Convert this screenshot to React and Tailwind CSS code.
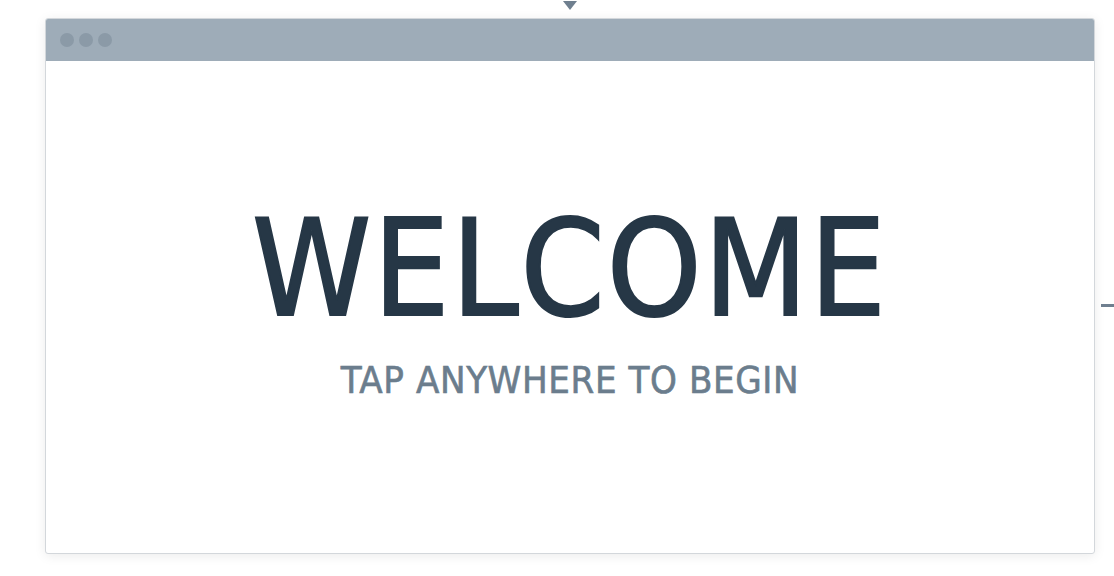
import React from 'react';

const App = () => {
  return (
    <div className="relative w-[1114px] h-[576px] bg-white overflow-hidden pt-[18px] pl-[45px]">
      {/* top marker */}
      <div className="absolute left-[563px] top-[1px] w-0 h-0 border-l-[7px] border-r-[7px] border-t-[9px] border-l-transparent border-r-transparent border-t-[#6f7f8f]" />
      {/* right marker */}
      <div className="absolute left-[1101px] top-[304px] w-[13px] h-[3px] bg-[#6f7f8f]" />

      <div className="w-[1050px] h-[536px] bg-white border border-[#d3d7db] rounded-[3px] shadow-[0_2px_12px_rgba(0,0,0,0.08)] flex flex-col overflow-hidden">
        <div className="h-[42px] bg-[#9eacb8] flex items-center gap-[5px] px-[14px] shrink-0">
          <span className="w-[14px] h-[14px] rounded-full bg-[#8b9aa7]" />
          <span className="w-[14px] h-[14px] rounded-full bg-[#8b9aa7]" />
          <span className="w-[14px] h-[14px] rounded-full bg-[#8b9aa7]" />
        </div>
        <div className="flex-1 flex flex-col items-center pt-[141px]" style={{ fontFamily: '"DejaVu Sans Condensed", "DejaVu Sans", sans-serif' }}>
          <h1 className="text-[134px] leading-none text-[#263746] tracking-[2px] [-webkit-text-stroke:2px_#263746]">WELCOME</h1>
          <p className="mt-[25px] text-[38px] leading-none text-[#6b7d8d] tracking-[0.6px] [-webkit-text-stroke:0.6px_#6b7d8d]">TAP ANYWHERE TO BEGIN</p>
        </div>
      </div>
    </div>
  );
};

export default App;
